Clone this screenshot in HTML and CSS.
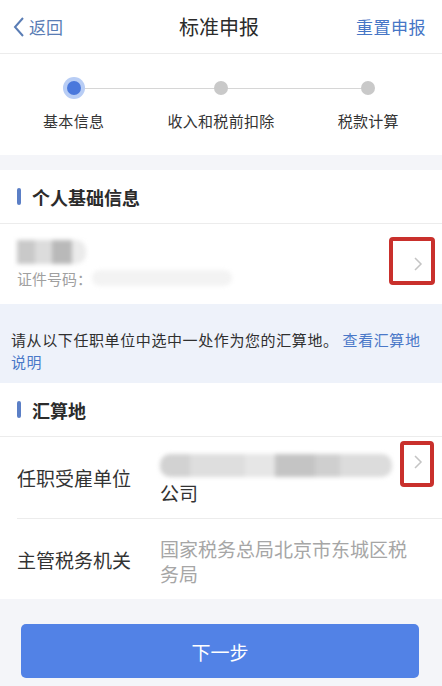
FILE: index.html
```html
<!DOCTYPE html>
<html>
<head>
<meta charset="utf-8">
<meta name="viewport" content="width=device-width, initial-scale=1">
<title>标准申报</title>
<link rel="stylesheet" href="styles.css">
</head>
<body>

<div class="topbar">
  <a class="back" href="#">
    <svg class="back-ico" width="14" height="22" viewBox="0 0 14 22"><path d="M11 2 L3 11 L11 20" fill="none" stroke="#5a7db5" stroke-width="2"/></svg>返回
  </a>
  <div class="title">标准申报</div>
  <a class="reset" href="#">重置申报</a>
</div>

<div class="steps">
  <div class="track"></div>
  <div class="step on"><span class="dot"></span><span class="label">基本信息</span></div>
  <div class="step"><span class="dot"></span><span class="label">收入和税前扣除</span></div>
  <div class="step"><span class="dot"></span><span class="label">税款计算</span></div>
</div>

<div class="card">
  <div class="sec-title"><span class="bar"></span>个人基础信息</div>
  <div class="person">
    <div class="person-info">
      <div class="blur name-blur">
        <span class="b1"></span><span class="b2"></span><span class="b3"></span><span class="b4"></span>
      </div>
      <div class="idno">证件号码：<span class="blur id-blur"></span></div>
    </div>
    <span class="chev">
      <svg width="10" height="16" viewBox="0 0 10 16"><path d="M2 2 L8 8 L2 14" fill="none" stroke="#c4c4c4" stroke-width="1.5"/></svg>
      <span class="mark mark1"></span>
    </span>
  </div>
</div>

<div class="notice">请从以下任职单位中选中一处作为您的汇算地。 <a href="#">查看汇算地说明</a></div>

<div class="card">
  <div class="sec-title"><span class="bar"></span>汇算地</div>
  <div class="field">
    <div class="f-label">任职受雇单位</div>
    <div class="f-value dark">
      <div class="blur co-blur">
        <span class="c1"></span><span class="c2"></span><span class="c3"></span><span class="c4"></span><span class="c5"></span><span class="c6"></span>
      </div>
      公司
    </div>
    <span class="chev chev-top">
      <svg width="10" height="16" viewBox="0 0 10 16"><path d="M2 2 L8 8 L2 14" fill="none" stroke="#c4c4c4" stroke-width="1.5"/></svg>
      <span class="mark mark2"></span>
    </span>
  </div>
  <div class="field last">
    <div class="f-label">主管税务机关</div>
    <div class="f-value">国家税务总局北京市东城区税务局</div>
  </div>
</div>

<div class="footer">
  <button class="next">下一步</button>
</div>

</body>
</html>
```

FILE: styles.css
```css
body { margin: 0; background: #f4f5f9; font-family: "Noto Sans CJK SC", "Noto Sans", sans-serif; color: #333; }
a { text-decoration: none; }

.topbar { height: 53px; background: #fff; border-bottom: 1px solid #ececec;
  display: flex; align-items: center; justify-content: space-between; padding: 0 16px 0 12px; }
.back { display: flex; align-items: center; color: #5a7db5; font-size: 17px; width: 80px; }
.back-ico { margin-right: 3px; }
.title { font-size: 20px; color: #2b2b2b; }
.reset { color: #4676c6; font-size: 17px; width: 80px; text-align: right; letter-spacing: 0.5px; }

.steps { position: relative; background: #fff; height: 101px; display: grid; grid-template-columns: repeat(3, 1fr); }
.track { position: absolute; left: 74px; right: 74px; top: 34px; height: 1px; background: #d6d6d6; }
.step { position: relative; display: flex; flex-direction: column; align-items: center; padding-top: 27px; }
.dot { width: 14px; height: 14px; border-radius: 50%; background: #c9c9c9; }
.step.on .dot { background: #4a78dc; box-shadow: 0 0 0 4px #b8cdf5; }
.label { margin-top: 15px; font-size: 15px; color: #333; letter-spacing: 0.3px; }

.card { background: #fff; margin-top: 15px; }
.notice + .card { margin-top: 0; }
.sec-title { height: 53px; display: flex; align-items: center; padding-left: 17px; font-size: 18px;
  font-weight: bold; color: #2b2b2b; border-bottom: 1px solid #ececec; }
.bar { width: 4px; height: 17px; border-radius: 2px; background: #5b7fc6; margin-right: 11px; }

.person { height: 80px; display: flex; align-items: center; justify-content: space-between; padding: 0 13px 0 17px; }
.person-info { display: flex; flex-direction: column; }
.name-blur { display: flex; height: 24px; margin-bottom: 4px; }
.name-blur span { height: 24px; }
.b1 { width: 18px; background: #c9c9c9; }
.b2 { width: 17px; background: #dcdcdc; }
.b3 { width: 20px; background: #b9b9b9; }
.b4 { width: 14px; background: #ebebeb; border-radius: 0 10px 10px 0; }
.blur { filter: blur(2px); }
.idno { font-size: 15px; color: #a0a0a0; display: flex; align-items: center; }
.id-blur { display: inline-block; width: 140px; height: 16px; background: #f3f3f3; border-radius: 8px; }

.chev { position: relative; display: flex; align-items: center; justify-content: center; width: 22px; height: 22px; }
.mark { position: absolute; border: 4px solid #c9302c; border-radius: 4px; }
.mark1 { left: -18px; top: -16px; width: 38px; height: 40px; }
.mark2 { left: -7px; top: -10px; width: 26px; height: 38px; }

.notice { background: #eef2fa; padding: 25px 12px 10px 11px; font-size: 15px; line-height: 22px; color: #2f2f2f;
  letter-spacing: 0.6px; }
.notice a { color: #4a78c8; }

.field { position: relative; display: flex; align-items: center; min-height: 80px; margin-left: 17px; padding-right: 13px;
  border-bottom: 1px solid #ececec; }
.field.last { border-bottom: none; }
.f-label { width: 143px; flex: none; font-size: 19px; color: #333; }
.f-value { flex: 1; font-size: 19px; line-height: 25px; color: #a6a6a6; padding: 17px 4px 13px 0; }
.f-value.dark { color: #333; padding-top: 15px; }
.co-blur { display: flex; height: 23px; width: 232px; margin: 2px 0 3px; }
.co-blur span { height: 23px; }
.c1 { width: 30px; background: #d2d2d2; border-radius: 10px 0 0 10px; }
.c2 { width: 55px; background: #dedede; }
.c3 { width: 30px; background: #e6e6e6; }
.c4 { width: 40px; background: #c4c4c4; }
.c5 { width: 25px; background: #cfcfcf; }
.c6 { width: 52px; background: #dcdcdc; border-radius: 0 10px 10px 0; }
.chev-top { align-self: flex-start; margin-top: 14px; }

.footer { padding: 25px 23px 20px 21px; }
.next { width: 100%; height: 54px; border: none; border-radius: 5px; background: #5282e6; color: #fff;
  font-family: inherit; font-size: 19px; }
```
